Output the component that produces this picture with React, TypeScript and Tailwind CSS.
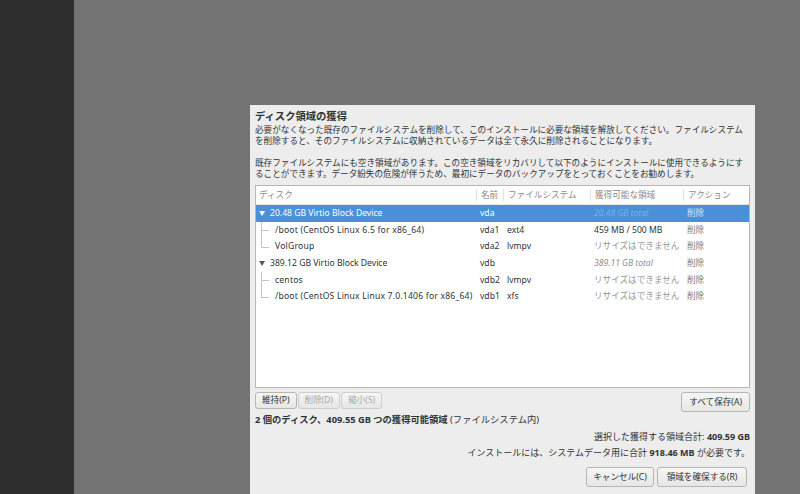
import React from 'react';

type Row = {
  disk: string;
  name: string;
  fs: string;
  space: string;
  spaceKind: 'total' | 'value' | 'none';
  level: 0 | 1;
  last?: boolean;
  selected?: boolean;
};

const rows: Row[] = [
  { disk: '20.48 GB Virtio Block Device', name: 'vda', fs: '', space: '20.48 GB total', spaceKind: 'total', level: 0, selected: true },
  { disk: '/boot (CentOS Linux 6.5 for x86_64)', name: 'vda1', fs: 'ext4', space: '459 MB / 500 MB', spaceKind: 'value', level: 1 },
  { disk: 'VolGroup', name: 'vda2', fs: 'lvmpv', space: 'リサイズはできません', spaceKind: 'none', level: 1, last: true },
  { disk: '389.12 GB Virtio Block Device', name: 'vdb', fs: '', space: '389.11 GB total', spaceKind: 'total', level: 0 },
  { disk: 'centos', name: 'vdb2', fs: 'lvmpv', space: 'リサイズはできません', spaceKind: 'none', level: 1 },
  { disk: '/boot (CentOS Linux Linux 7.0.1406 for x86_64)', name: 'vdb1', fs: 'xfs', space: 'リサイズはできません', spaceKind: 'none', level: 1, last: true },
];

const cols = 'grid grid-cols-[220px_27px_87px_93px_1fr]';

function Button({ label, disabled, className = '' }: { label: string; disabled?: boolean; className?: string }) {
  return (
    <button
      className={`rounded-[3px] border bg-gradient-to-b from-[#f6f6f5] to-[#e6e6e4] px-[6px] leading-none ${
        disabled ? 'border-[#cfcfcd] text-[#a9aaa8]' : 'border-[#b6b6b3] text-[#2e3436]'
      } ${className}`}
    >
      {label}
    </button>
  );
}

function TreeCell({ row }: { row: Row }) {
  if (row.level === 0) {
    return (
      <div className="flex items-center pl-[3px]">
        <span className={`text-[6px] mr-[5px] ${row.selected ? 'text-white' : 'text-[#555]'}`}>▼</span>
        <span className="whitespace-nowrap">{row.disk}</span>
      </div>
    );
  }
  return (
    <div className="flex items-center h-full">
      <div className="relative w-[19px] h-full shrink-0">
        <div className={`absolute left-[5px] top-0 w-px bg-[#c4c4c4] ${row.last ? 'h-1/2' : 'h-full'}`} />
        <div className="absolute left-[5px] top-1/2 w-[8px] h-px bg-[#c4c4c4]" />
      </div>
      <span className="whitespace-nowrap tracking-[0.2px]">{row.disk}</span>
    </div>
  );
}

export default function App() {
  return (
    <div className="w-[800px] h-[494px] flex overflow-hidden font-['Noto_Sans','Noto_Sans_CJK_JP',sans-serif] text-[8.6px] text-[#2e3436]">
      <div className="w-[74px] bg-[#2e2e2e] shrink-0" />
      <div className="flex-1 bg-[#737373] pl-[176px] pt-[105px]">
        <div className="w-[505px] h-[400px] bg-[#ededed] px-[5px] pt-[5px]">
          <h1 className="font-bold text-[10.3px] leading-[13px]">ディスク領域の獲得</h1>

          <p className="mt-[2px] leading-[11px] whitespace-nowrap">
            必要がなくなった既存のファイルシステムを削除して、このインストールに必要な領域を解放してください。ファイルシステム
            <br />
            を削除すると、そのファイルシステムに収納されているデータは全て永久に削除されることになります。
          </p>
          <p className="mt-[11px] leading-[11px] whitespace-nowrap">
            既存ファイルシステムにも空き領域があります。この空き領域をリカバリして以下のようにインストールに使用できるようにす
            <br />
            ることができます。データ紛失の危険が伴うため、最初にデータのバックアップをとっておくことをお勧めします。
          </p>

          {/* ディスク一覧 */}
          <div className="mt-[5px] h-[203px] bg-white border border-[#b6b6b3]">
            <div className={`${cols} h-[19px] items-center text-[#8b8d8a] border-b border-[#e6e6e6]`}>
              <div className="pl-[3px]">ディスク</div>
              <div className="pl-[4px] border-l border-[#e2e2e2] leading-[12px]">名前</div>
              <div className="pl-[4px] border-l border-[#e2e2e2] leading-[12px]">ファイルシステム</div>
              <div className="pl-[4px] border-l border-[#e2e2e2] leading-[12px]">獲得可能な領域</div>
              <div className="pl-[4px] border-l border-[#e2e2e2] leading-[12px]">アクション</div>
            </div>
            {rows.map((r) => (
              <div
                key={r.name}
                className={`${cols} h-[16.7px] items-center ${r.selected ? 'bg-[#4a90d9] text-white' : ''}`}
              >
                <TreeCell row={r} />
                <div className="pl-[4px]">{r.name}</div>
                <div className="pl-[4px]">{r.fs}</div>
                <div
                  className={`pl-[4px] whitespace-nowrap ${
                    r.spaceKind === 'total'
                      ? r.selected
                        ? 'italic text-[#78aee6]'
                        : 'italic text-[#8f918e]'
                      : r.spaceKind === 'none'
                      ? 'text-[#959794]'
                      : ''
                  }`}
                >
                  {r.space}
                </div>
                <div className={`pl-[4px] ${r.selected ? 'text-[#d3e3f6]' : 'text-[#7d7f7c]'}`}>削除</div>
              </div>
            ))}
          </div>

          <div className="mt-[4px] flex items-start justify-between">
            <div className="flex gap-[1px]">
              <Button label="維持(P)" className="h-[17px]" />
              <Button label="削除(D)" disabled className="h-[17px]" />
              <Button label="縮小(S)" disabled className="h-[17px]" />
            </div>
            <Button label="すべて保存(A)" className="h-[20px] px-[7px]" />
          </div>

          <p className="mt-[2px] text-[9.3px] leading-[12px] whitespace-nowrap">
            <span className="font-bold">2 個のディスク、409.55 GB つの獲得可能領域</span> (ファイルシステム内)
          </p>

          <div className="mt-[3px] text-right text-[9px] leading-[16px]">
            <p>
              選択した獲得する領域合計: <span className="font-bold">409.59 GB</span>
            </p>
            <p>
              インストールには、システムデータ用に合計 <span className="font-bold">918.46 MB</span> が必要です。
            </p>
          </div>

          <div className="mt-[6px] flex justify-end gap-[3px] pr-[3px]">
            <Button label="キャンセル(C)" className="h-[20px] w-[68px]" />
            <Button label="領域を確保する(R)" className="h-[20px] w-[90px]" />
          </div>
        </div>
      </div>
    </div>
  );
}
